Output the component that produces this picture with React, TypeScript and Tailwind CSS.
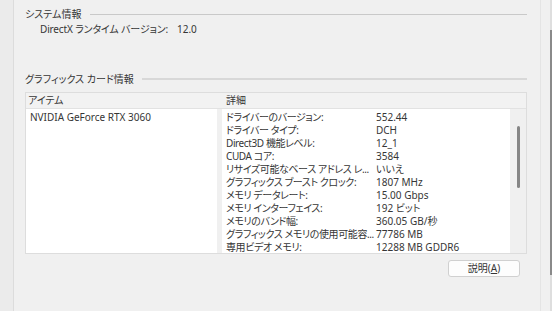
import React from "react";

const rows: [string, string][] = [
  ["ドライバーのバージョン:", "552.44"],
  ["ドライバー タイプ:", "DCH"],
  ["Direct3D 機能レベル:", "12_1"],
  ["CUDA コア:", "3584"],
  ["リサイズ可能なベース アドレス レ...", "いいえ"],
  ["グラフィックス ブースト クロック:", "1807 MHz"],
  ["メモリ データレート:", "15.00 Gbps"],
  ["メモリ インターフェイス:", "192 ビット"],
  ["メモリのバンド幅:", "360.05 GB/秒"],
  ["グラフィックス メモリの使用可能容...", "77786 MB"],
  ["専用ビデオ メモリ:", "12288 MB GDDR6"],
];

export default function App() {
  return (
    <div
      className="w-[552px] h-[311px] bg-[#f0f0f0] flex overflow-hidden text-[10px] text-[#363636] [font-feature-settings:'palt']"
      style={{ fontFamily: '"Noto Sans", "Noto Sans CJK JP", sans-serif' }}
    >
      <div className="w-[14px] h-full bg-[#ebebeb] border-r border-[#dcdcdc]" />
      <div className="flex-1 flex flex-col pl-[11px] pr-[13px] pt-[7px]">
        <div className="flex items-center h-[14px] leading-[14px]">
          <span>システム情報</span>
          <div className="flex-1 h-px bg-[#c9c9c9] ml-[9px]" />
        </div>
        <div className="flex h-[14px] leading-[14px] mt-[1px] pl-[15px]">
          <span className="w-[137px] tracking-[-0.15px]">DirectX ランタイム バージョン:</span>
          <span>12.0</span>
        </div>
        <div className="flex items-center h-[14px] leading-[14px] mt-[36px]">
          <span>グラフィックス カード情報</span>
          <div className="flex-1 h-[2px] bg-[#d8d8d8] ml-[8px]" />
        </div>
        <div className="mt-[6px] border border-[#dddddd] flex flex-col">
          <div className="flex h-[16px] leading-[15px] border-b border-[#e2e2e2] bg-[#f2f2f2]">
            <span className="w-[196px] pl-[2px]">アイテム</span>
            <span className="pl-[4px]">詳細</span>
          </div>
          <div className="flex h-[144px]">
            <div className="w-[191px] bg-white pl-[4px] pt-[2px] leading-[13px]">
              NVIDIA GeForce RTX 3060
            </div>
            <div className="w-[5px]" />
            <div className="w-[288px] bg-white pl-[4px] pt-[2px] overflow-hidden">
              {rows.map(([k, v]) => (
                <div key={k} className="flex h-[13px] leading-[13px] whitespace-nowrap">
                  <span className="w-[150px] tracking-[-0.4px]">{k}</span>
                  <span>{v}</span>
                </div>
              ))}
            </div>
            <div className="w-[16px] pl-[7px] pt-[17px]">
              <div className="w-[3px] h-[62px] rounded-full bg-[#868686]" />
            </div>
          </div>
        </div>
        <div className="flex justify-end mt-[6px] pr-[7px]">
          <div className="w-[72px] h-[17px] bg-[#fdfdfd] border border-[#d0d0d0] rounded-[3px] flex items-center justify-center leading-[15px]">
            説明(<span className="underline">A</span>)
          </div>
        </div>
      </div>
      <div className="w-[12px] h-full border-l border-[#e4e4e4] flex justify-end">
        <div className="w-[2px] h-full bg-[#dedede] flex flex-col">
          <div className="mt-[30px] h-[245px] bg-[#8a8a8a]" />
        </div>
      </div>
    </div>
  );
}
